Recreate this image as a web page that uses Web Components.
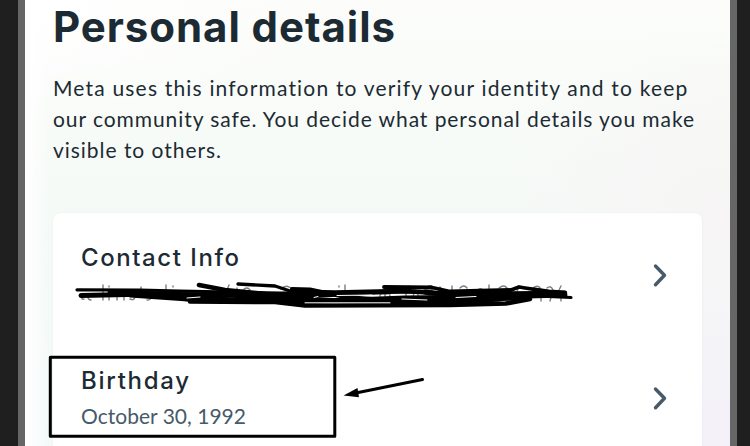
<!DOCTYPE html>
<html lang="en">
<head>
  <meta charset="utf-8">
  <title>Personal details</title>
  <style>
    body {
      margin: 0;
      height: 446px;
      overflow: hidden;
    }
  </style>
</head>
<body>
  <phone-frame>
    <page-heading>
      <fit-text slot="title" width="342">Personal details</fit-text>
      <fit-text slot="body" width="635">Meta uses this information to verify your identity and to keep</fit-text>
      <fit-text slot="body" width="641">our community safe. You decide what personal details you make</fit-text>
      <fit-text slot="body" width="168">visible to others.</fit-text>
    </page-heading>
    <details-card>
      <detail-row>
        <fit-text slot="label" width="158">Contact Info</fit-text>
      </detail-row>
      <detail-row>
        <fit-text slot="label" width="108">Birthday</fit-text>
        <fit-text slot="value" width="165">October 30, 1992</fit-text>
      </detail-row>
    </details-card>
    <pen-marks slot="marks"></pen-marks>
  </phone-frame>

  <script>
    // Dark side bars with the phone page between them
    class PhoneFrame extends HTMLElement {
      constructor() {
        super();
        this.attachShadow({ mode: "open" });
        this.shadowRoot.innerHTML = `
          <style>
            :host {
              display: block;
              position: relative;
              box-sizing: border-box;
              width: 750px;
              height: 446px;
              padding: 0 13px 0 18px;
              background: #1f1f1f;
              overflow: hidden;
            }
            main {
              box-sizing: border-box;
              height: 446px;
              padding: 0 28px;
              border: solid #666;
              border-width: 0 7px;
              background:
                linear-gradient(90deg, #fff 0, rgba(255, 255, 255, 0) 24px),
                radial-gradient(ellipse 320px 130px at 0 0, #fff, rgba(255, 255, 255, 0)),
                radial-gradient(ellipse 260px 200px at 100% 100%, #f4f2f8 20%, rgba(244, 242, 248, 0)),
                radial-gradient(ellipse 240px 200px at 100% 50%, #f7f5f5, rgba(247, 245, 245, 0)),
                linear-gradient(#fcfdfa, #f5faf7 45%, #f3fafa);
            }
          </style>
          <main><slot></slot></main>
          <slot name="marks"></slot>
        `;
      }
    }

    // One line of text, letter-spaced to fill the given width
    class FitText extends HTMLElement {
      constructor() {
        super();
        this.attachShadow({ mode: "open" });
        this.shadowRoot.innerHTML = `
          <style>
            :host { display: block; white-space: nowrap; }
            span { display: inline-block; }
          </style>
          <span><slot></slot></span>
        `;
      }

      connectedCallback() {
        requestAnimationFrame(() => this.fit());
      }

      fit() {
        const span = this.shadowRoot.querySelector("span");
        span.style.letterSpacing = "0";
        const natural = span.getBoundingClientRect().width;
        const gaps = this.textContent.length - 1;
        span.style.letterSpacing = (this.getAttribute("width") - natural) / gaps + "px";
      }
    }

    class PageHeading extends HTMLElement {
      constructor() {
        super();
        this.attachShadow({ mode: "open" });
        this.shadowRoot.innerHTML = `
          <style>
            :host { display: block; color: #1c2b33; }
            h1 {
              margin: 0;
              font: 700 42px/54px Inter, sans-serif;
            }
            p {
              margin: 18px 0 0;
              font: 21px/31px Lato, sans-serif;
            }
          </style>
          <h1><slot name="title"></slot></h1>
          <p><slot name="body"></slot></p>
        `;
      }
    }

    class DetailsCard extends HTMLElement {
      constructor() {
        super();
        this.attachShadow({ mode: "open" });
        this.shadowRoot.innerHTML = `
          <style>
            :host {
              display: block;
              width: 649px;
              height: 300px;
              margin-top: 48px;
              border-radius: 7px;
              background: #fff;
              box-shadow: 0 0 2px rgba(90, 110, 130, 0.1);
            }
          </style>
          <slot></slot>
        `;
      }
    }

    class DetailRow extends HTMLElement {
      constructor() {
        super();
        this.attachShadow({ mode: "open" });
        this.shadowRoot.innerHTML = `
          <style>
            :host {
              display: flex;
              justify-content: space-between;
              box-sizing: border-box;
              height: 123px;
              padding: 27px 34px 0 28px;
            }
            .label {
              color: #1c2b33;
              font: 500 24px/36px Inter, sans-serif;
            }
            .value {
              margin-top: 2px;
              color: #465a69;
              font: 21px/30px Lato, sans-serif;
            }
            svg { margin-top: 21px; }
          </style>
          <div>
            <div class="label"><slot name="label"></slot></div>
            <div class="value"><slot name="value"></slot></div>
          </div>
          <svg width="18" height="28" viewBox="0 0 18 28" fill="none" stroke="#465a69"
            stroke-width="3.4" stroke-linecap="round" stroke-linejoin="round">
            <path d="M5.5 5 L14.5 14.3 L5.5 23.7"/>
          </svg>
        `;
      }
    }

    // Hand-drawn annotations over the page: scribble, box and arrow
    class PenMarks extends HTMLElement {
      constructor() {
        super();
        this.attachShadow({ mode: "open" });
        this.shadowRoot.innerHTML = `
          <style>
            :host {
              position: absolute;
              top: 0;
              left: 0;
              pointer-events: none;
            }
            svg { display: block; }
          </style>
          <svg width="750" height="446" viewBox="0 0 750 446" fill="none" stroke="#000"
            stroke-linecap="round" stroke-linejoin="round">
            <g stroke="#75808a" stroke-width="1.4">
              <path d="M84 299q-3 1-2-3M91 300q-3 0-3-3M103 285v15M109 286v1M109 295v5M117 296v4M124 296v4M130 299q4 2 5-2M141 287v10M147 300q4 0 4-3M166 285v10M173 286v1M173 294v5M184 300q5 2 8-1"/>
              <path d="M217 296v4M223 300l6-15M237 288v12M243 290q4-4 7 0M281 289q6-6 12 1M339 286v1M345 285v7M380 299v-4q3-3 5 0v4M385 295q3-3 5 0v4M406 299v-11l3-2M415 290q-4 10 1 9q5-3 0-6M427 287q4-3 6 1l-6 11"/>
              <path d="M440 287q-4 4 0 8q6-3 0-8M452 286v6M460 288q4-4 7 0M477 291q3-4 6-1M489 285v6q3-3 6 0M499 288q5-4 8 0M520 286l-3 5M533 288q5-4 8 1v12M547 288q4-3 6 2l-3 11M561 286l-4 8M561 295v6"/>
            </g>
            <path stroke-width="3.2" d="M77 289.8 L140 290 L180 291 L280 293 L390 292 L470 293 L571 297.5"/>
            <path stroke-width="5" d="M81 295.5 L150 294 L210 299 L300 302 L405 298 L490 297 L565 295"/>
            <path stroke-width="5" d="M110 292.5 L178 294.5 L230 295 L285 299 L350 301 L450 302 L500 299"/>
            <path stroke-width="4.5" d="M190 301.5 L275 302 L305 305.5 L450 305 L506 303.5 L530 299"/>
            <path stroke-width="4" d="M130 295.5 L188 299.5 L240 301 L290 300"/>
            <path stroke-width="4.6" d="M199 285 L225 290 L265 294 L310 296 L360 293 L407 291 L445 294 L565 293"/>
            <path stroke-width="3.4" d="M238 284 L275 286 L290 291 L335 292 L400 290.5"/>
            <path stroke-width="3.8" d="M384 287 L432 287.5 L450 291.5 L511 290 L519 287 L525 288 L549 291.5 L565 292.5"/>
            <path stroke-width="4" d="M292 289 L310 289.5 L345 297 L400 301 L485 299.5 L530 298"/>
            <path stroke-width="5" d="M425 292 L470 297 L530 295.5"/>
            <path stroke="#fff" stroke-width="1" d="M187 298l13-1M305 302.8h85M318 296.5l-4 1M337 295.5l35-.5M402 299l25 1M456 297.5l20-1"/>
            <rect x="50.3" y="357.2" width="284.5" height="79" stroke-width="3"/>
            <path stroke-width="3" d="M422.5 379.5 L357 392.7"/>
            <path fill="#000" stroke="none" d="M343.5 395.5 L357.5 388 L359 397.2 Z"/>
          </svg>
        `;
      }
    }

    customElements.define("phone-frame", PhoneFrame);
    customElements.define("fit-text", FitText);
    customElements.define("page-heading", PageHeading);
    customElements.define("details-card", DetailsCard);
    customElements.define("detail-row", DetailRow);
    customElements.define("pen-marks", PenMarks);
  </script>
</body>
</html>
